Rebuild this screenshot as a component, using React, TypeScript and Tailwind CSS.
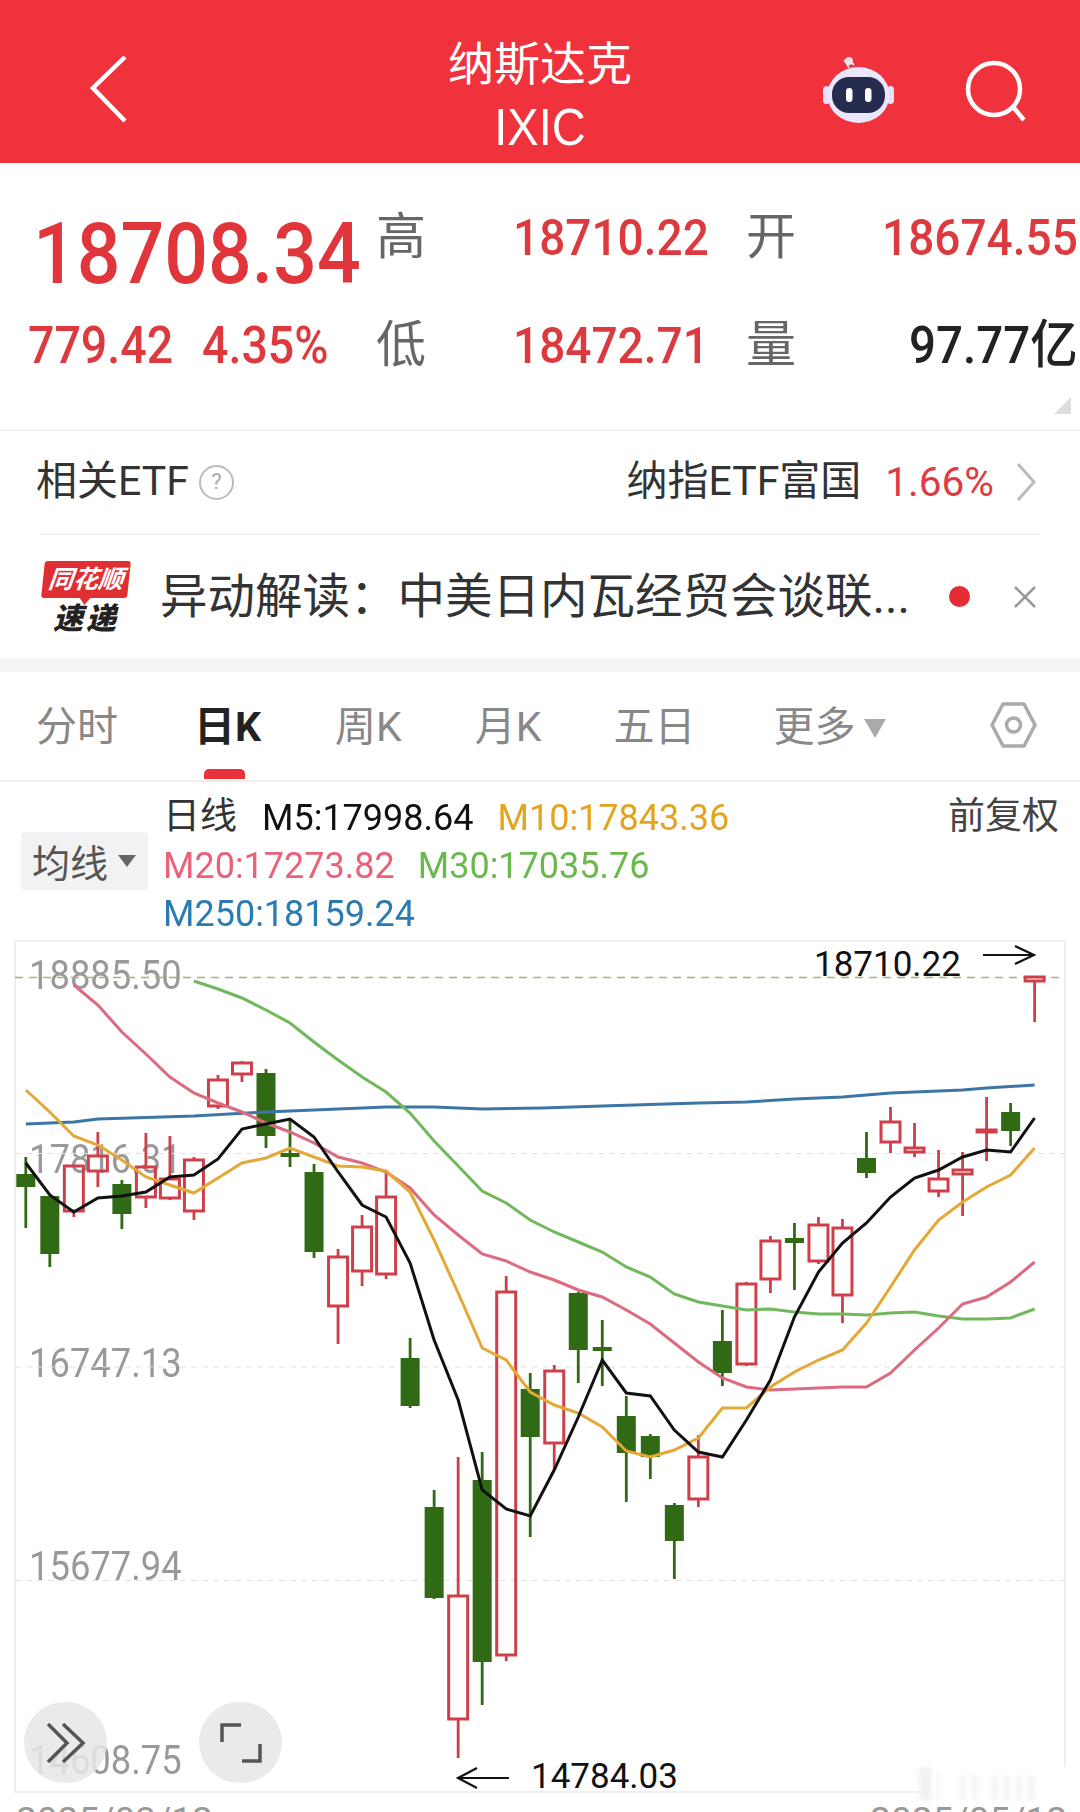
import React from 'react';

type Candle = [number, number, number, number, 'r' | 'g'];

// high, body top, body bottom, low, colour (page pixel coordinates)
const candles: Candle[] = [
  [1157, 1174, 1187, 1228, 'g'],
  [1196, 1196, 1254, 1267, 'g'],
  [1165, 1165, 1212, 1217, 'r'],
  [1132, 1155, 1172, 1187, 'r'],
  [1180, 1184, 1214, 1229, 'g'],
  [1133, 1166, 1198, 1208, 'r'],
  [1136, 1178, 1199, 1200, 'r'],
  [1157, 1159, 1212, 1220, 'r'],
  [1075, 1079, 1107, 1109, 'r'],
  [1061, 1062, 1075, 1082, 'r'],
  [1069, 1073, 1136, 1148, 'g'],
  [1120, 1153, 1157, 1167, 'g'],
  [1164, 1172, 1252, 1258, 'g'],
  [1249, 1256, 1307, 1344, 'r'],
  [1215, 1226, 1272, 1286, 'r'],
  [1173, 1196, 1275, 1279, 'r'],
  [1338, 1358, 1406, 1408, 'g'],
  [1490, 1507, 1598, 1599, 'g'],
  [1457, 1595, 1720, 1758, 'r'],
  [1452, 1480, 1662, 1705, 'g'],
  [1276, 1291, 1656, 1661, 'r'],
  [1373, 1389, 1437, 1537, 'g'],
  [1365, 1370, 1444, 1469, 'r'],
  [1292, 1293, 1350, 1383, 'g'],
  [1320, 1347, 1351, 1386, 'g'],
  [1396, 1416, 1453, 1502, 'g'],
  [1434, 1436, 1457, 1479, 'g'],
  [1503, 1505, 1541, 1579, 'g'],
  [1435, 1456, 1500, 1507, 'r'],
  [1310, 1341, 1373, 1386, 'g'],
  [1282, 1283, 1365, 1366, 'r'],
  [1236, 1240, 1280, 1293, 'r'],
  [1223, 1238, 1243, 1290, 'g'],
  [1217, 1224, 1262, 1264, 'r'],
  [1219, 1227, 1296, 1323, 'r'],
  [1132, 1158, 1173, 1178, 'g'],
  [1107, 1121, 1143, 1153, 'r'],
  [1123, 1147, 1153, 1157, 'r'],
  [1150, 1178, 1192, 1197, 'r'],
  [1152, 1169, 1175, 1216, 'r'],
  [1097, 1129, 1133, 1161, 'r'],
  [1103, 1112, 1131, 1146, 'g'],
  [976, 976, 982, 1022, 'r'],
];

const cx = (i: number) => 25.8 + i * 24.02;

const line = (start: number, ys: number[]) =>
  ys.map((y, i) => `${cx(start + i).toFixed(1)},${y}`).join(' ');

const m5 = line(0, [1163, 1195, 1212, 1198, 1196, 1192, 1177, 1175, 1159, 1129, 1124, 1119, 1137, 1172, 1205, 1217, 1263, 1340, 1400, 1490, 1509, 1516, 1470, 1417, 1360, 1393, 1396, 1430, 1452, 1457, 1420, 1380, 1317, 1272, 1243, 1223, 1197, 1178, 1170, 1157, 1150, 1152, 1118]);
const m10 = line(0, [1090, 1112, 1136, 1145, 1160, 1177, 1185, 1193, 1178, 1163, 1158, 1148, 1157, 1166, 1167, 1171, 1192, 1240, 1293, 1348, 1360, 1392, 1405, 1413, 1427, 1451, 1457, 1450, 1438, 1408, 1408, 1387, 1372, 1360, 1350, 1323, 1287, 1250, 1220, 1202, 1187, 1175, 1148]);
const m20 = line(2, [985, 1005, 1032, 1054, 1077, 1093, 1103, 1112, 1123, 1132, 1143, 1157, 1163, 1172, 1188, 1215, 1235, 1254, 1261, 1272, 1280, 1290, 1297, 1310, 1324, 1343, 1362, 1378, 1387, 1390, 1389, 1388, 1387, 1387, 1373, 1350, 1328, 1304, 1297, 1282, 1262]);
const m30 = line(7, [981, 989, 998, 1010, 1023, 1042, 1060, 1077, 1092, 1113, 1141, 1166, 1191, 1203, 1220, 1232, 1242, 1252, 1267, 1277, 1294, 1302, 1306, 1310, 1309, 1312, 1314, 1314, 1315, 1313, 1312, 1316, 1319, 1319, 1318, 1309]);
const m250 = [
  [0, 1124], [2, 1122], [3, 1119], [7, 1116], [10, 1112], [12, 1110], [15, 1107], [17, 1107],
  [19, 1109], [21.5, 1108], [24, 1106], [28, 1103], [30, 1102], [32, 1099], [34, 1097],
  [36, 1093], [39, 1090], [40, 1088], [42, 1085],
].map(([i, y]) => `${cx(i).toFixed(1)},${y}`).join(' ');

const axisLabels = [
  { text: '18885.50', top: 14 },
  { text: '17816.31', top: 198 },
  { text: '16747.13', top: 402 },
  { text: '15677.94', top: 605 },
  { text: '14608.75', top: 799 },
];

const Header = () => (
  <div className="flex h-[163px] items-center justify-between bg-[#ef323c] pt-[18px] text-white">
    <svg className="mb-[3px] ml-[90px] h-[68px] w-[38px]" viewBox="0 0 38 68" fill="none">
      <path d="M35 2 3 33l32 33" stroke="#fff" strokeWidth="4.5" />
    </svg>
    <div className="ml-[130px] mt-[10px] flex w-[200px] flex-col items-center">
      <div className="text-[46px] leading-[62px]">纳斯达克</div>
      <div className="scale-y-110 text-[47px] leading-[64px] [font-family:'Liberation_Sans',sans-serif]">IXIC</div>
    </div>
    <div className="flex items-center">
      <svg className="mr-[66px] h-[70px] w-[76px]" viewBox="824 54 76 70">
        <path d="M851 66c-2-5-3-7-5-7m0 0c5-3 7 1 10 4" stroke="#f4dfe6" strokeWidth="2" fill="none" />
        <circle cx="851" cy="59" r="4" fill="#f6dfe6" />
        <rect x="825" y="84" width="7" height="18" rx="3.5" fill="#e6e0f8" />
        <rect x="889" y="84" width="7" height="18" rx="3.5" fill="#e6e0f8" />
        <ellipse cx="860.5" cy="93" rx="31" ry="28" fill="#eae6fb" />
        <rect x="834" y="75" width="53" height="36" rx="17" fill="#252c4f" />
        <rect x="848" y="86" width="6.5" height="14" rx="3.2" fill="#fff" />
        <rect x="867" y="86" width="6.5" height="14" rx="3.2" fill="#fff" />
      </svg>
      <svg className="mr-[54px] mt-[3px] h-[64px] w-[62px]" viewBox="0 0 62 64" fill="none" stroke="#fff" strokeWidth="4.5">
        <circle cx="30" cy="29" r="26" />
        <path d="m50 48 10 12" />
      </svg>
    </div>
  </div>
);

const Quote = () => (
  <div className="relative flex h-[268px] border-b-2 border-[#f1f1f1]">
    <div className="w-[379px] shrink-0">
      <div className="ml-[33px] mt-[47px] origin-center scale-y-110 text-[77px] font-medium leading-[88px] text-[#e0353a]">18708.34</div>
      <div className="ml-[28px] mt-[17px] flex origin-left scale-y-110 gap-[29px] text-[46.5px] font-medium leading-[60px] text-[#dc3a3e]">
        <span>779.42</span>
        <span>4.35%</span>
      </div>
    </div>
    <div className="-ml-[3px] mt-[44px] grid h-[168px] flex-1 grid-cols-[137px_233px_136px_1fr] grid-rows-[60px_48px] gap-y-[48px] pr-[4px] text-[46px] leading-[60px]">
      <span className="text-[50px] text-[#666]">高</span>
      <span className="scale-y-110 font-medium text-[#dc3a3e]">18710.22</span>
      <span className="text-[50px] text-[#666]">开</span>
      <span className="scale-y-110 text-right font-medium text-[#dc3a3e]">18674.55</span>
      <span className="text-[50px] text-[#666]">低</span>
      <span className="scale-y-110 font-medium text-[#dc3a3e]">18472.71</span>
      <span className="text-[50px] text-[#666]">量</span>
      <span className="scale-y-110 text-right text-[47.5px] font-medium text-[#222]">97.77亿</span>
    </div>
    <svg className="absolute bottom-[15px] right-[9px] h-[17px] w-[17px]" viewBox="0 0 17 17">
      <path d="M17 0v17H0z" fill="#ddd" />
    </svg>
  </div>
);

const EtfRow = () => (
  <>
    <div className="mx-[36px] flex h-[102px] items-center pr-[8px] text-[41px] text-[#333]">
      <span>相关ETF</span>
      <span className="ml-[10px] flex h-[35px] w-[35px] items-center justify-center rounded-full border-2 border-[#bbb] text-[22px] leading-none text-[#aaa]">?</span>
      <span className="ml-auto">纳指ETF富国</span>
      <span className="ml-[24px] text-[40.5px] text-[#df3a42]">1.66%</span>
      <svg className="ml-[22px] h-[38px] w-[20px]" viewBox="0 0 20 38" fill="none">
        <path d="m2 1 16 18L2 37" stroke="#bbb" strokeWidth="3" />
      </svg>
    </div>
    <div className="mx-[40px] h-[2px] bg-[#f1f1f1]" />
  </>
);

const NewsRow = () => (
  <div className="flex h-[123px] items-center">
    <div className="relative ml-[43px] mt-[2px] flex h-[74px] w-[86px] flex-col items-center">
      <div className="relative flex h-[37px] w-[86px] -skew-x-6 items-center justify-center rounded-[3px] bg-[#df2f33] text-[25px] font-bold italic leading-none text-white">
        同花顺
        <span className="absolute bottom-[-7px] left-[38px] h-0 w-0 border-x-[6px] border-t-[8px] border-x-transparent border-t-[#df2f33]" />
      </div>
      <div className="mt-[5px] text-[30px] font-black italic leading-[32px] tracking-[3px] text-[#222]">速递</div>
    </div>
    <div className="ml-[31px] w-[795px] whitespace-nowrap text-[47.5px] leading-[60px] text-[#333]">异动解读：中美日内瓦经贸会谈联...</div>
    <span className="ml-[-6px] h-[21px] w-[21px] rounded-full bg-[#e52b34]" />
    <svg className="ml-[44px] h-[22px] w-[22px]" viewBox="0 0 22 22" fill="none">
      <path d="m1 1 20 20M21 1 1 21" stroke="#999" strokeWidth="2.5" />
    </svg>
  </div>
);

const Tabs = () => (
  <div className="relative flex h-[110px] items-center border-b-2 border-[#eee] pt-[4px] text-[41px] text-[#888]">
    <span className="ml-[36px]">分时</span>
    <span className="relative ml-[76px] font-bold text-[#222]">
      日K
      <span className="absolute left-[10px] top-[72px] h-[10px] w-[41px] rounded-t-[5px] bg-[#e8323c]" />
    </span>
    <span className="ml-[74px]">周K</span>
    <span className="ml-[73px]">月K</span>
    <span className="ml-[72px]">五日</span>
    <span className="ml-[78px]">更多</span>
    <svg className="ml-[8px] h-[19px] w-[22px]" viewBox="0 0 22 19">
      <path d="M0 0h22L11 19z" fill="#aaa" />
    </svg>
    <svg className="mb-[6px] ml-auto mr-[43px] h-[46px] w-[47px]" viewBox="0 0 47 46" fill="none" stroke="#aaa">
      <path d="M13 2h21l11 21-11 21H13L2 23z" strokeWidth="3.5" strokeLinejoin="round" />
      <circle cx="23.5" cy="23" r="7" strokeWidth="3.5" />
    </svg>
  </div>
);

const MaInfo = () => (
  <div className="flex h-[158px] pt-[11px] text-[36px] leading-[48px]">
    <div className="w-[164px] shrink-0 pl-[21px] pt-[39px]">
      <div className="flex h-[58px] w-[127px] items-center rounded-[4px] bg-[#f2f2f2] pl-[11px] pt-[6px] text-[38px] text-[#555]">
        均线
        <svg className="mb-[6px] ml-[10px] h-[12px] w-[18px]" viewBox="0 0 18 12">
          <path d="M0 0h18L9 12z" fill="#666" />
        </svg>
      </div>
    </div>
    <div className="-ml-[1px] flex-1">
      <div className="flex pr-[21px]">
        <span className="text-[37px] text-[#333]">日线</span>
        <span className="ml-[25px] scale-y-105 text-[#111]">M5:17998.64</span>
        <span className="ml-[24px] scale-y-105 text-[#e3a420]">M10:17843.36</span>
        <span className="ml-auto text-[37px] text-[#444]">前复权</span>
      </div>
      <div className="flex">
        <span className="scale-y-105 text-[#e8627a]">M20:17273.82</span>
        <span className="ml-[23px] scale-y-105 text-[#6ab94f]">M30:17035.76</span>
      </div>
      <div className="origin-left scale-y-105 text-[#2b7bb0]">M250:18159.24</div>
    </div>
  </div>
);

const Chart = () => (
  <div className="relative h-[872px] overflow-hidden">
    <div className="mx-[14px] h-[853px] border-2 border-[#efefef]" />
    <div className="ml-[16px] mr-[13px] mt-[8px] flex justify-between text-[37px] leading-[40px] text-[#999]">
      <span>2025/03/12</span>
      <span>2025/05/12</span>
    </div>

    {axisLabels.map((l) => (
      <span key={l.text} className="absolute left-[29px] scale-y-110 text-[36.4px] leading-[44px] text-[#999]" style={{ top: l.top }}>
        {l.text}
      </span>
    ))}

    <svg className="absolute inset-0 h-[872px] w-[1080px]" viewBox="0 940 1080 872" fill="none">
      <path d="M15 977.5h1050" stroke="#b5ad7c" strokeWidth="1.5" strokeDasharray="8 6" />
      <path d="M15 1153.5h1050M15 1367h1050M15 1580.5h1050" stroke="#e2e2e2" strokeWidth="1.2" strokeDasharray="6 5" />

      {candles.map(([high, top, bottom, low, color], i) => {
        const x = cx(i);
        const c = color === 'r' ? '#cf3f4a' : '#316a14';
        return (
          <g key={i}>
            <path d={`M${x} ${high}V${top}M${x} ${bottom}V${low}`} stroke={c} strokeWidth="2.8" />
            {color === 'r' ? (
              <rect x={x - 9.5} y={top + 1} width="19" height={Math.max(bottom - top - 2, 2)} stroke={c} strokeWidth="3" />
            ) : (
              <rect x={x - 9.5} y={top} width="19" height={bottom - top} fill={c} />
            )}
          </g>
        );
      })}

      <polyline points={m250} stroke="#3d76a4" strokeWidth="3" />
      <polyline points={m30} stroke="#71b85c" strokeWidth="3" />
      <polyline points={m20} stroke="#dd6a80" strokeWidth="3" />
      <polyline points={m10} stroke="#e3a835" strokeWidth="3" />
      <polyline points={m5} stroke="#111" strokeWidth="3" />

      <path d="M983 955h50m-18-9 19 9-19 9" stroke="#111" strokeWidth="2.2" />
      <path d="M509 1778h-50m18-10-19 10 19 10" stroke="#111" strokeWidth="2.2" />
    </svg>

    <span className="absolute left-[814px] top-[3px] text-[35px] leading-[44px] text-[#111]">18710.22</span>
    <span className="absolute left-[531px] top-[815px] text-[35px] leading-[44px] text-[#111]">14784.03</span>

    <div className="absolute left-[24px] top-[762px] flex h-[81px] w-[83px] items-center justify-center rounded-full bg-[#e6e6e6]/85">
      <svg className="h-[40px] w-[40px]" viewBox="0 0 40 40" fill="none" stroke="#555" strokeWidth="3.5">
        <path d="M2 1l19 19L2 39M17 1l20 19-20 19" />
      </svg>
    </div>
    <div className="absolute left-[199px] top-[762px] flex h-[81px] w-[83px] items-center justify-center rounded-full bg-[#e6e6e6]/85">
      <svg className="h-[40px] w-[42px]" viewBox="0 0 42 40" fill="none" stroke="#555" strokeWidth="3.5">
        <path d="M2 19V2h19M22 38h18V21" />
      </svg>
    </div>

    {/* blurred watermark over the corner */}
    <div className="absolute left-[919px] top-[827px] flex h-[33px] w-[150px] items-end gap-[6px] bg-white blur-[2px]">
      <span className="h-[33px] w-[12px] bg-[#f1f1f1]" />
      <span className="h-[28px] w-[3px] bg-[#f4f4f4]" />
      <span className="ml-[14px] h-[24px] w-[6px] bg-[#f5f5f5]" />
      <span className="h-[24px] w-[6px] bg-[#f5f5f5]" />
      <span className="ml-[8px] h-[24px] w-[6px] bg-[#f3f3f3]" />
      <span className="h-[24px] w-[6px] bg-[#f3f3f3]" />
      <span className="h-[24px] w-[6px] bg-[#f3f3f3]" />
      <span className="h-[24px] w-[6px] bg-[#f3f3f3]" />
    </div>
  </div>
);

const App = () => {
  return (
    <div className="h-[1812px] w-[1080px] overflow-hidden bg-white [font-family:Roboto,'Noto_Sans_CJK_SC',sans-serif]">
      <Header />
      <Quote />
      <EtfRow />
      <NewsRow />
      <div className="h-[14px] bg-[#f4f4f4]" />
      <Tabs />
      <MaInfo />
      <Chart />
    </div>
  );
};

export default App;
